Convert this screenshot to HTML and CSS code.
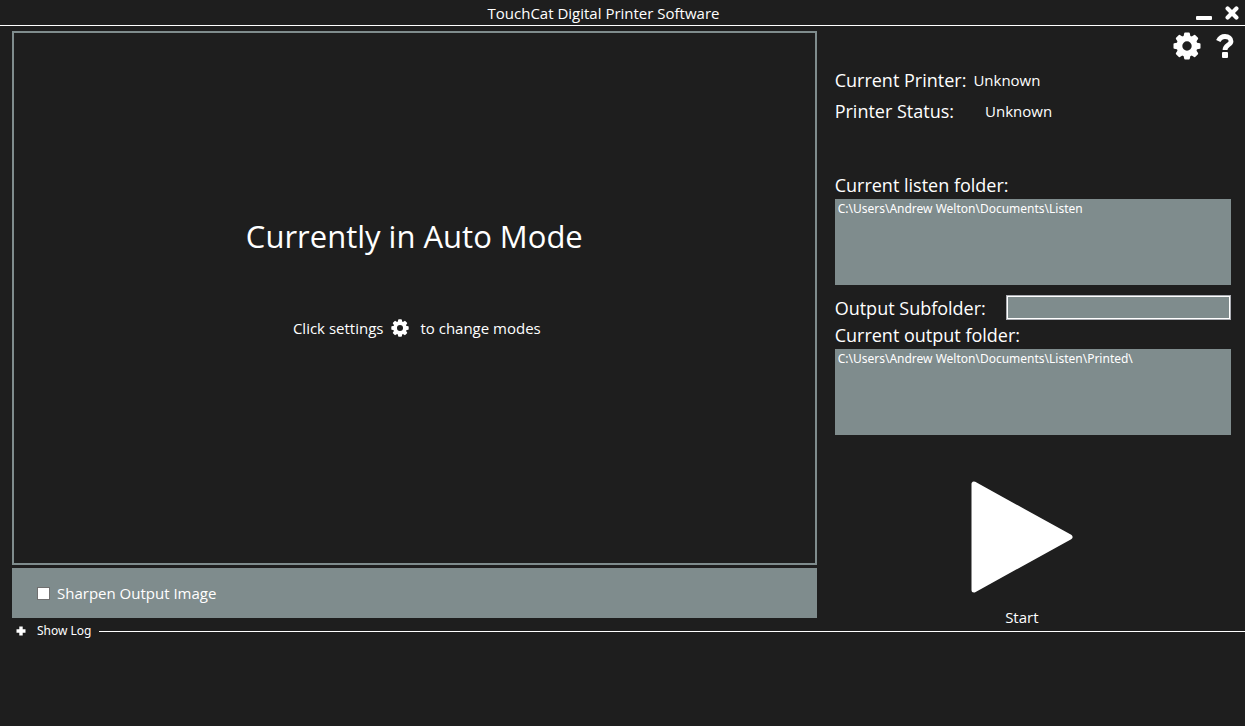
FILE: index.html
```html
<!DOCTYPE html>
<html lang="en">
<head>
<meta charset="utf-8">
<title>TouchCat Digital Printer Software</title>
<link rel="stylesheet" href="styles.css">
</head>
<body>
<svg class="sprite" aria-hidden="true">
  <symbol id="gear" viewBox="0 0 28 28">
    <circle cx="14" cy="14" r="7.6" fill="none" stroke="currentColor" stroke-width="5.8"/>
    <g fill="currentColor">
      <path id="teeth" d="M10.4 5 11.2 1.2Q11.4.5 12 .5H16Q16.600.5 16.800 1.200L17.600 5ZM10.400 23 11.200 26.800Q11.400 27.500 12 27.500H16Q16.600 27.500 16.800 26.800L17.600 23Z"/>
      <use href="#teeth" transform="rotate(45 14 14)"/>
      <use href="#teeth" transform="rotate(90 14 14)"/>
      <use href="#teeth" transform="rotate(135 14 14)"/>
    </g>
  </symbol>
</svg>
<div class="window">
  <header class="titlebar">
    <h1 class="title">TouchCat Digital Printer Software</h1>
    <div class="window-buttons">
      <button class="icon-button" aria-label="Minimize"><svg width="16" height="16" viewBox="0 0 16 16"><rect y="11" width="16" height="4" rx="1" fill="currentColor"/></svg></button>
      <button class="icon-button" aria-label="Close"><svg width="14" height="14" viewBox="0 0 14 14"><path d="M2.600 2.600 11.400 11.400M11.400 2.600 2.600 11.400" stroke="currentColor" stroke-width="4.200" stroke-linecap="round"/></svg></button>
    </div>
  </header>
  <main class="main">
    <section class="left">
      <div class="preview">
        <h2 class="mode">Currently in Auto Mode</h2>
        <p class="hint"><span>Click settings</span><svg class="hint-gear" width="18" height="18"><use href="#gear"/></svg><span>to change modes</span></p>
      </div>
      <div class="options">
        <input class="check" type="checkbox" id="sharpen">
        <label for="sharpen">Sharpen Output Image</label>
      </div>
    </section>
    <aside class="side">
      <div class="tools">
        <button class="icon-button" aria-label="Settings"><svg width="28" height="28"><use href="#gear"/></svg></button>
        <button class="icon-button" aria-label="Help"><svg width="18" height="24" viewBox="0 0 18 24"><path d="M2.300 7C3.800 4 6 2.500 9 2.500C12.600 2.500 15 4.400 15 7.200C15 11 9 11 9 16" fill="none" stroke="currentColor" stroke-width="4.800"/><rect x="6" y="18" width="6" height="6" rx="1" fill="currentColor"/></svg></button>
      </div>
      <dl class="status">
        <div class="status-row"><dt>Current Printer:</dt><dd>Unknown</dd></div>
        <div class="status-row status-wide"><dt>Printer Status:</dt><dd>Unknown</dd></div>
      </dl>
      <label class="label" for="listen">Current listen folder:</label>
      <textarea class="folder" id="listen" readonly>C:\Users\Andrew Welton\Documents\Listen</textarea>
      <div class="subfolder">
        <label class="label" for="sub">Output Subfolder:</label>
        <input class="sub-input" type="text" id="sub">
      </div>
      <label class="label" for="output">Current output folder:</label>
      <textarea class="folder" id="output" readonly>C:\Users\Andrew Welton\Documents\Listen\Printed\</textarea>
      <button class="start">
        <svg width="102" height="112" viewBox="0 0 102 112"><path d="M3 3V109L99 56Z" fill="currentColor" stroke="currentColor" stroke-width="5" stroke-linejoin="round"/></svg>
        <span>Start</span>
      </button>
    </aside>
  </main>
  <footer class="log">
    <button class="log-toggle"><svg width="10" height="10" viewBox="0 0 10 10"><path d="M5 .5V9.500M.5 5H9.500" stroke="currentColor" stroke-width="3.400"/></svg><span>Show Log</span></button>
    <div class="log-line"></div>
  </footer>
</div>
</body>
</html>
```
FILE: styles.css
```css
* { box-sizing: border-box; }
body {
  margin: 0;
  background: #1e1e1e;
  color: #fff;
  font: 15px/20px "Open Sans", "Noto Sans", sans-serif;
}
h1, h2, p, dl, dd { margin: 0; font-weight: 400; }
svg { display: block; }
button {
  padding: 0;
  border: 0;
  background: none;
  color: inherit;
  font: inherit;
  cursor: pointer;
}
.sprite { position: absolute; width: 0; height: 0; }
.window { display: flex; flex-direction: column; min-height: 100vh; }
.titlebar {
  display: grid;
  grid-template-columns: 1fr auto 1fr;
  align-items: center;
  height: 26px;
  padding: 0 6px;
  border-bottom: 1px solid #fff;
}
.title { grid-column: 2; padding-right: 38px; font-size: 15px; }
.window-buttons { display: flex; justify-content: flex-end; align-items: center; gap: 13px; }
.main {
  flex: 1;
  display: grid;
  grid-template-columns: minmax(0, 67fr) minmax(380px, 33fr);
  gap: 18px;
  padding: 5px 14px 0 12px;
}
.left { display: flex; flex-direction: column; gap: 3px; }
.preview {
  flex: 1;
  display: flex;
  flex-direction: column;
  align-items: center;
  padding-top: 181px;
  border: 2px solid #7f8c8d;
}
.mode { font-size: 31px; line-height: 44px; }
.hint { display: flex; align-items: center; gap: 8px; margin-top: 60px; padding-left: 5px; }
.hint-gear { margin-right: 3px; }
.options {
  display: flex;
  align-items: center;
  gap: 7px;
  height: 50px;
  padding-left: 25px;
  background: #7f8c8d;
}
.check {
  appearance: none;
  width: 13px;
  height: 13px;
  margin: 0;
  border: 1px solid #707070;
  background: #fff;
}
.check:checked { background: #1e1e1e; }
.side { display: flex; flex-direction: column; margin-bottom: -10px; }
.tools { display: flex; justify-content: flex-end; align-items: center; gap: 15px; height: 30px; margin-right: -3px; }
.status { padding-top: 3px; }
.status-row { display: flex; align-items: center; gap: 7px; height: 31px; }
.status-wide { gap: 31px; }
dt, .label { font-size: 18px; line-height: 28px; }
.status + .label { margin-top: 45px; }
.folder {
  display: block;
  width: 100%;
  height: 86px;
  padding: 1px 3px;
  border: 0;
  background: #7f8c8d;
  color: #fff;
  font: 12px/18px "Noto Sans", "Open Sans", sans-serif;
  resize: none;
}
.subfolder { display: flex; align-items: center; gap: 20px; height: 27px; margin-top: 9px; }
.sub-input {
  flex: 1;
  min-width: 0;
  height: 25px;
  padding: 0 4px;
  border: 2px solid #fff;
  outline: 1px solid #abadb3;
  outline-offset: -1px;
  background: #7f8c8d;
  color: #fff;
  font: inherit;
}
.start { display: flex; flex-direction: column; align-items: center; gap: 14px; align-self: center; margin-top: 46px; margin-right: 22px; }
.log { display: flex; align-items: center; gap: 7px; height: 26px; margin-bottom: 82px; padding-left: 16px; }
.log-toggle { display: flex; align-items: center; gap: 11px; font: 12px/18px "Noto Sans", "Open Sans", sans-serif; }
.log-line { flex: 1; height: 1px; background: #fff; }
```
